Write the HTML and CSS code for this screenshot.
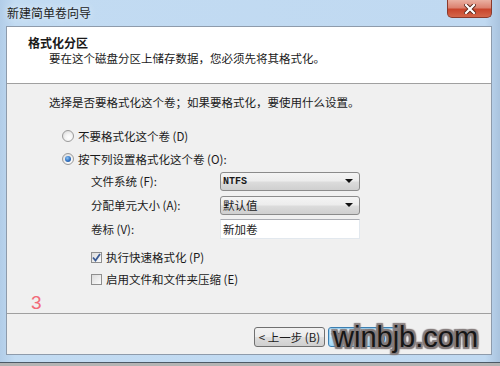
FILE: index.html
```html
<!DOCTYPE html>
<html lang="zh-CN">
<head>
    <meta charset="UTF-8">
    <title>新建简单卷向导</title>
    <link rel="stylesheet" href="styles.css">
</head>
<body>
    <div class="window">
        <div class="titlebar">
            <span class="title">新建简单卷向导</span>
            <button class="close">
                <svg width="12" height="10" viewBox="0 0 12 10">
                    <path d="M2 1 L10 9 M10 1 L2 9" stroke="#5a2418" stroke-width="4" stroke-linecap="square"/>
                    <path d="M2 1 L10 9 M10 1 L2 9" stroke="#ffffff" stroke-width="2.2" stroke-linecap="square"/>
                </svg>
            </button>
        </div>

        <div class="client">
            <div class="header">
                <div class="head-title">格式化分区</div>
                <div class="head-sub">要在这个磁盘分区上储存数据，您必须先将其格式化。</div>
            </div>

            <div class="content">
                <p class="intro">选择是否要格式化这个卷；如果要格式化，要使用什么设置。</p>

                <label class="opt opt-first"><span class="radio"></span>不要格式化这个卷 (D)</label>
                <label class="opt"><span class="radio on"></span>按下列设置格式化这个卷 (O):</label>

                <div class="form">
                    <span class="lbl">文件系统 (F):</span>
                    <div class="combo"><span class="val mono">NTFS</span><span class="arrow"></span></div>

                    <span class="lbl">分配单元大小 (A):</span>
                    <div class="combo"><span class="val">默认值</span><span class="arrow"></span></div>

                    <span class="lbl">卷标 (V):</span>
                    <div class="field">新加卷</div>
                </div>

                <div class="checks">
                    <label class="chk"><span class="box"><svg width="9" height="9" viewBox="0 0 9 9"><path d="M1 4.5 L3.5 7.5 L8 1" fill="none" stroke="#3b5b94" stroke-width="1.8"/></svg></span>执行快速格式化 (P)</label>
                    <label class="chk"><span class="box"></span>启用文件和文件夹压缩 (E)</label>
                </div>

                <div class="step">3</div>
            </div>

            <div class="footer">
                <button class="btn">&lt; 上一步 (B)</button>
                <button class="btn btn-default">下一步 (N) &gt;</button>
            </div>
        </div>

        <!-- водяной знак поверх кнопок -->
        <div class="watermark">winbjb.com</div>
    </div>
</body>
</html>
```

FILE: styles.css
```css
body {
    margin: 0;
    background-color: #b4b4b4;
    font-family: "Noto Sans CJK SC", "Liberation Sans", sans-serif;
    font-size: 11.5px;
    color: #1a1a1a;
}
.window {
    position: relative;
    width: 500px;
    height: 363px;
    box-sizing: border-box;
    padding: 0 8px 0 6px;
    background: linear-gradient(90deg, #b2cde8 0, #c2dbf2 3%, #c0d9f1 97%, #a9c3de 100%);
    border-bottom: 1px solid #4d5966;
}
.titlebar {
    display: flex;
    justify-content: space-between;
    align-items: flex-start;
    height: 26px;
}
.title {
    padding-left: 1px;
    line-height: 26px;
    font-size: 12px;
    color: #222;
    text-shadow: 0 0 6px #e8f2fc;
}
.close {
    width: 45px;
    height: 18px;
    padding: 0;
    border: 1px solid #8a3a2c;
    border-top: none;
    border-radius: 0 0 5px 5px;
    background: linear-gradient(#eab0a2 0, #dc8270 45%, #c9452c 55%, #d4664a 100%);
    display: flex;
    align-items: center;
    justify-content: center;
}
.client {
    border: 1px solid #8e9bab;
    background-color: #f0f0f0;
}
.header {
    height: 57px;
    box-sizing: border-box;
    padding-top: 8px;
    background-color: #fff;
    border-bottom: 1px solid #a0a0a0;
}
.head-title {
    padding-left: 21px;
    line-height: 16px;
    font-weight: bold;
    font-size: 12px;
}
.head-sub {
    padding-left: 42px;
    line-height: 15px;
}
.content {
    height: 229px;
    display: flex;
    flex-direction: column;
    align-items: flex-start;
}
.intro {
    margin: 10px 0 0 42px;
    line-height: 16px;
}
.opt {
    display: flex;
    align-items: center;
    gap: 4px;
    height: 20px;
    margin: 3px 0 0 55px;
}
.opt-first {
    margin-top: 16px;
}
.radio {
    width: 12px;
    height: 12px;
    box-sizing: border-box;
    border-radius: 50%;
    border: 1px solid #9a9a9a;
    background: radial-gradient(circle at 60% 65%, #ffffff 0, #f4f4f4 40%, #d2d2d2 100%);
    display: flex;
    align-items: center;
    justify-content: center;
}
.radio.on::after {
    content: "";
    width: 6px;
    height: 6px;
    border-radius: 50%;
    background: radial-gradient(circle at 40% 35%, #8cc4f4 0, #2f6fbf 55%, #1b4a8e 100%);
}
.form {
    display: grid;
    grid-template-columns: 129px 140px;
    grid-auto-rows: 20px;
    row-gap: 4px;
    align-items: center;
    margin: 2px 0 0 84px;
}
.combo {
    height: 19px;
    box-sizing: border-box;
    border: 1px solid #8b8b8b;
    border-radius: 3px;
    background: linear-gradient(#f4f4f4 0, #ececec 48%, #dcdcdc 52%, #cfcfcf 100%);
    display: flex;
    align-items: center;
    justify-content: space-between;
    padding: 0 6px 0 2px;
}
.mono {
    font-family: "Liberation Mono", monospace;
    font-weight: bold;
    font-size: 10px;
}
.arrow {
    width: 0;
    height: 0;
    border-left: 4px solid transparent;
    border-right: 4px solid transparent;
    border-top: 4px solid #111;
}
.field {
    height: 20px;
    box-sizing: border-box;
    border: 1px solid #e2e8ee;
    border-top-color: #abadb3;
    background-color: #fff;
    padding-left: 2px;
    line-height: 18px;
}
.checks {
    display: flex;
    flex-direction: column;
    gap: 2px;
    margin: 8px 0 0 84px;
}
.chk {
    display: flex;
    align-items: center;
    gap: 4px;
    height: 20px;
}
.box {
    width: 11px;
    height: 11px;
    box-sizing: border-box;
    border: 1px solid #8f8f8f;
    background: linear-gradient(135deg, #dcdcdc, #fbfbfb);
    display: flex;
    align-items: center;
    justify-content: center;
}
.step {
    margin: 5px 0 0 24px;
    line-height: 18px;
    font-family: "Liberation Sans", sans-serif;
    font-size: 19px;
    color: #f26a78;
}
.footer {
    height: 41px;
    box-sizing: border-box;
    border-top: 1px solid #a0a0a0;
    padding: 13px 0 0 247px;
    display: flex;
    gap: 3px;
}
.btn {
    width: 71px;
    height: 20px;
    padding: 0;
    font-family: inherit;
    font-size: 11.5px;
    color: #1a1a1a;
    border: 1px solid #707070;
    border-radius: 3px;
    background: linear-gradient(#f2f2f2 0, #ebebeb 48%, #dddddd 52%, #cfcfcf 100%);
}
.btn-default {
    border-color: #3c7fb1;
    background: linear-gradient(#eaf6fd 0, #d9f0fc 48%, #bee6fd 52%, #a7d9f5 100%);
    box-shadow: inset 0 0 0 1px #9fd5f6;
}
.watermark {
    position: absolute;
    left: 333px;
    top: 321px;
    font-family: "Liberation Sans", sans-serif;
    font-size: 29px;
    color: #161616;
    text-shadow: 2px 0 1px #847b7b, -2px 0 1px #847b7b, 0 2px 1px #847b7b, 0 -2px 1px #847b7b,
        2px 2px 1px #847b7b, -2px -2px 1px #847b7b, 2px -2px 1px #847b7b, -2px 2px 1px #847b7b;
}
```
